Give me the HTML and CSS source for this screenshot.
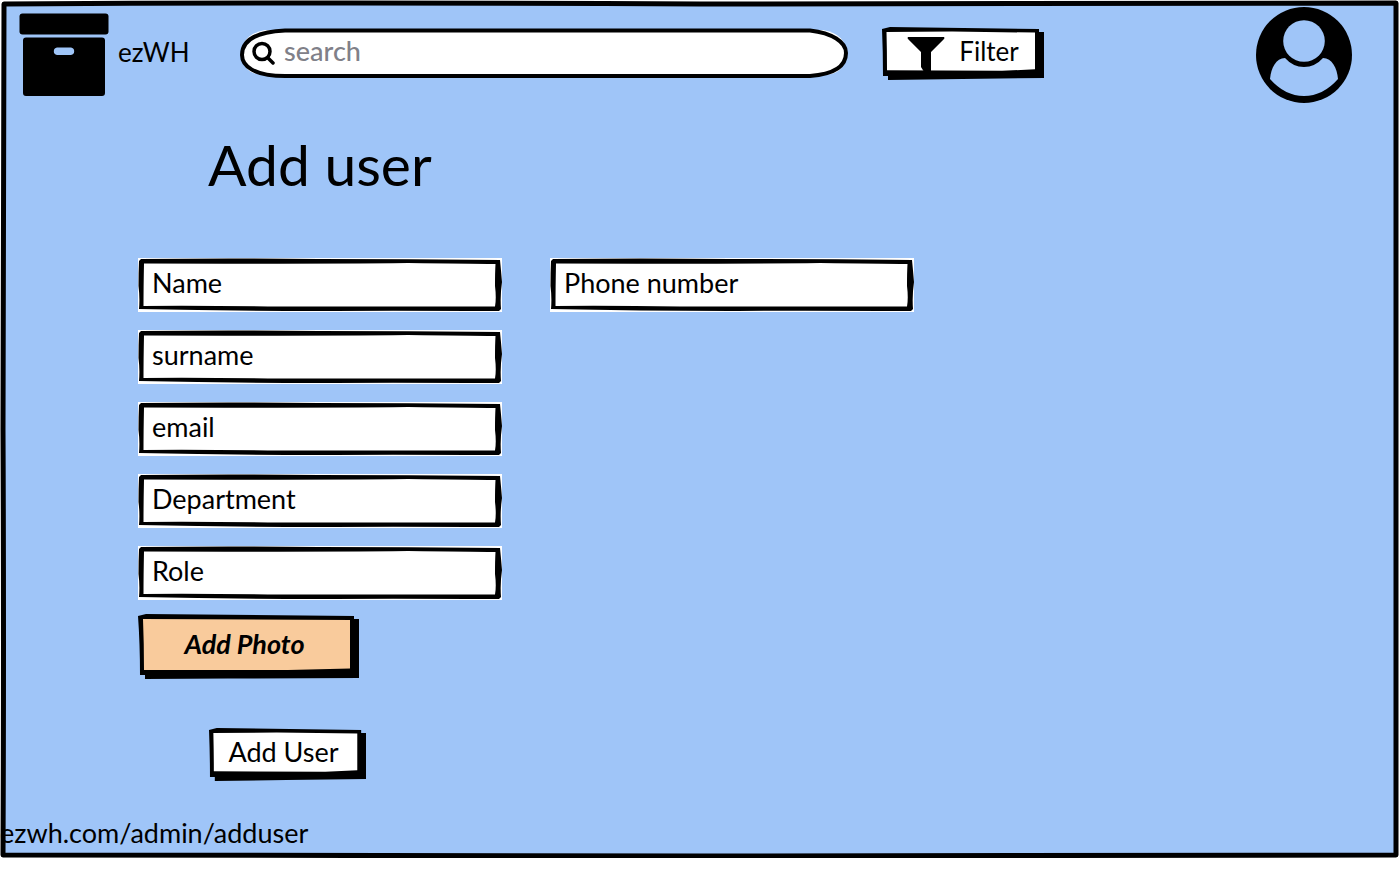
FILE: index.html
```html
<!DOCTYPE html>
<html lang="en">
<head>
<meta charset="utf-8">
<meta name="viewport" content="width=device-width, initial-scale=1">
<title>ezWH - Add user</title>
<link rel="stylesheet" href="styles.css">
</head>
<body>
<svg class="symbols" aria-hidden="true">
  <symbol id="field-sketch" viewBox="0 0 364 54" preserveAspectRatio="none">
    <path fill="#fff" d="M0 0H364V54H0Z"/>
    <path fill-rule="evenodd" d="M1 3L3 1Q90 0 180 1Q270 1 362 2Q363 12 364 24Q362 38 363 51L361 53Q240 52.500 180 53Q90 53 1 51Q2 40 0.500 28Q0.500 14 1 3ZM6 5.500Q5.500 30 5.500 48Q60 47.500 130 48.500Q260 48.500 357 48.500Q358.500 40 357 28Q357 14 357.500 6Q330 5.500 270 5Q180 6 6 5.500Z"/>
  </symbol>
  <symbol id="button-sketch" viewBox="0 0 162 53" preserveAspectRatio="none">
    <path d="M0 2L8 0L157 2V5H162V50L80 51L6 52V48H1Q1 25 0 2Z"/>
    <path fill="#fff" d="M4.500 5L70 4.500L153 5.500V41.500L120 43L5 42.500Q5 24 4.500 5Z"/>
  </symbol>
  <symbol id="photo-sketch" viewBox="0 0 221 66" preserveAspectRatio="none">
    <path d="M0 2L8 0L216 2V5H221V64L90 64.500L7 65V61H2Q2 30 0 2Z"/>
    <path fill="#f9cb9c" d="M5 5L212 6V54.500L150 56L6 56Q6 30 5 5Z"/>
  </symbol>
</svg>

<div class="screen">
  <svg class="screen-frame" viewBox="0 0 1400 858" preserveAspectRatio="none" aria-hidden="true">
    <path class="screen-line" d="M4 4Q350 2 700 4Q1050 5 1396 3Q1397 430 1396 855Q1050 857 700 856Q350 856 3 855Q4 640 3 430Q3 200 4 4Z"/>
  </svg>

  <header class="topbar">
    <svg class="archive" viewBox="0 0 90 84" aria-hidden="true">
      <rect x="0.500" y="0.500" width="89" height="21" rx="3"/>
      <path fill-rule="evenodd" d="M7 24.500H83Q86 24.500 86 27.500V80Q86 83 83 83H7Q4 83 4 80V27.500Q4 24.500 7 24.500ZM38 34.500A3.800 3.800 0 0 0 38 42H52A3.800 3.800 0 0 0 52 34.500Z"/>
    </svg>
    <span class="brand">ezWH</span>

    <label class="search">
      <svg class="sketch" viewBox="0 0 608 50" preserveAspectRatio="none" aria-hidden="true">
        <path fill="#fff" d="M25 2H583Q606 6 606 25Q606 47 582 47H25Q2 47 2 25Q2 6 25 2Z"/>
        <path fill="#fff" stroke="#000" stroke-width="4" d="M45 2.500H570C592 5 606 14 606 25C606 37 596 46 570 48H45C14 48 2 38 2 27C2 13 14 4 45 2.500Z"/>
      </svg>
      <svg class="search-icon" viewBox="0 0 24 24" aria-hidden="true">
        <circle cx="10" cy="10.500" r="8" fill="none" stroke="#000" stroke-width="3.500"/>
        <path d="M16 17L21 22" stroke="#000" stroke-width="3.500" stroke-linecap="round"/>
      </svg>
      <input class="search-input" type="search" placeholder="search" aria-label="search">
    </label>

    <button class="button filter" type="button">
      <svg class="sketch" aria-hidden="true"><use href="#button-sketch"/></svg>
      <svg class="funnel" viewBox="0 0 38 38" aria-hidden="true">
        <path d="M1 0H37Q38 1 37 2L24 15V38H19L14 30V15L1 2Q0 1 1 0Z"/>
      </svg>
      Filter
    </button>

    <button class="avatar" type="button" aria-label="Account">
      <svg class="avatar-icon" viewBox="0 0 96 96" aria-hidden="true">
        <circle cx="48" cy="48" r="48"/>
        <circle cx="48" cy="34" r="20.800" fill="#9fc5f8"/>
        <path fill="#9fc5f8" d="M29 51C20 51 15 61 14 72Q29 89 48 89Q67 89 82 72C81 61 76 51 67 51Q59 60 48 60Q37 60 29 51Z"/>
      </svg>
    </button>
  </header>

  <main>
    <h1 class="title">Add user</h1>
    <form class="form">
      <div class="columns">
        <div class="column">
          <div class="field"><svg class="sketch" aria-hidden="true"><use href="#field-sketch"/></svg><input class="field-input" type="text" placeholder="Name" aria-label="Name"></div>
          <div class="field"><svg class="sketch" aria-hidden="true"><use href="#field-sketch"/></svg><input class="field-input" type="text" placeholder="surname" aria-label="surname"></div>
          <div class="field"><svg class="sketch" aria-hidden="true"><use href="#field-sketch"/></svg><input class="field-input" type="email" placeholder="email" aria-label="email"></div>
          <div class="field"><svg class="sketch" aria-hidden="true"><use href="#field-sketch"/></svg><input class="field-input" type="text" placeholder="Department" aria-label="Department"></div>
          <div class="field"><svg class="sketch" aria-hidden="true"><use href="#field-sketch"/></svg><input class="field-input" type="text" placeholder="Role" aria-label="Role"></div>
        </div>
        <div class="column">
          <div class="field"><svg class="sketch" aria-hidden="true"><use href="#field-sketch"/></svg><input class="field-input" type="tel" placeholder="Phone number" aria-label="Phone number"></div>
        </div>
      </div>
      <button class="button photo" type="button"><svg class="sketch" aria-hidden="true"><use href="#photo-sketch"/></svg>Add Photo</button>
      <button class="button submit" type="submit"><svg class="sketch" aria-hidden="true"><use href="#button-sketch"/></svg>Add User</button>
    </form>
  </main>

  <footer class="address">ezwh.com/admin/adduser</footer>
</div>
</body>
</html>
```

FILE: styles.css
```css
* {
  box-sizing: border-box;
}

body {
  margin: 0;
  background: #fff;
  color: #000;
  font-family: Lato, "Open Sans", sans-serif;
  font-size: 27px;
  line-height: 32px;
}

button,
input {
  padding: 0;
  border: 0;
  background: none;
  color: inherit;
  font: inherit;
}

.symbols {
  position: absolute;
  width: 0;
  height: 0;
}

.screen {
  position: relative;
  isolation: isolate;
  padding: 7px 0 9px;
}

.screen-frame {
  position: absolute;
  inset: 0;
  z-index: -1;
  width: 100%;
  height: 100%;
}

.screen-line {
  fill: #9fc5f8;
  stroke: #000;
  stroke-width: 5px;
  stroke-linejoin: round;
}

.sketch {
  position: absolute;
  inset: 0;
  z-index: -1;
  width: 100%;
  height: 100%;
}

.topbar {
  display: flex;
  align-items: center;
  padding: 0 48px 0 19px;
}

.archive {
  flex: none;
  width: 90px;
  height: 84px;
}

.brand {
  width: 122px;
  margin-left: 9px;
  padding-bottom: 6px;
  font-size: 26px;
}

.search {
  position: relative;
  isolation: isolate;
  display: flex;
  flex: 0 1 608px;
  align-items: center;
  gap: 8px;
  height: 50px;
  margin-bottom: 4px;
  padding: 0 24px 0 12px;
}

.search-icon {
  flex: none;
  width: 24px;
  height: 24px;
}

.search-input {
  flex: 1;
  min-width: 0;
  outline: 0;
  padding-bottom: 4px;
  font-weight: 500;
}

.search-input::placeholder {
  color: #808088;
  opacity: 1;
}

.button {
  position: relative;
  isolation: isolate;
  display: flex;
  align-items: center;
  justify-content: center;
  height: 54px;
  padding: 0 8px 6px 0;
}

.filter {
  gap: 14px;
  width: 162px;
  margin: 0 0 2px 34px;
  padding: 0 0 6px;
  font-size: 26px;
}

.funnel {
  align-self: flex-end;
  width: 38px;
  height: 38px;
}

.avatar {
  width: 96px;
  height: 96px;
  margin-left: auto;
}

.avatar-icon {
  display: block;
  width: 100%;
  height: 100%;
}

.title {
  margin: 29px 0 62px 208px;
  font-size: 57px;
  font-weight: 400;
  line-height: 64px;
}

.form {
  padding: 0 24px 0 138px;
}

.columns {
  display: grid;
  grid-template-columns: repeat(2, minmax(0, 364px));
  column-gap: 48px;
}

.column {
  display: flex;
  flex-direction: column;
  gap: 18px;
}

.field {
  position: relative;
  isolation: isolate;
  height: 54px;
}

.field-input {
  width: 100%;
  height: 100%;
  outline: 0;
  padding: 0 14px 6px;
}

.field-input::placeholder {
  color: #000;
  opacity: 1;
}

.photo {
  width: 221px;
  height: 66px;
  margin-top: 14px;
  font-style: italic;
  font-weight: 700;
}

.submit {
  width: 157px;
  margin: 48px 0 0 71px;
}

.address {
  margin-top: 35px;
}
```
